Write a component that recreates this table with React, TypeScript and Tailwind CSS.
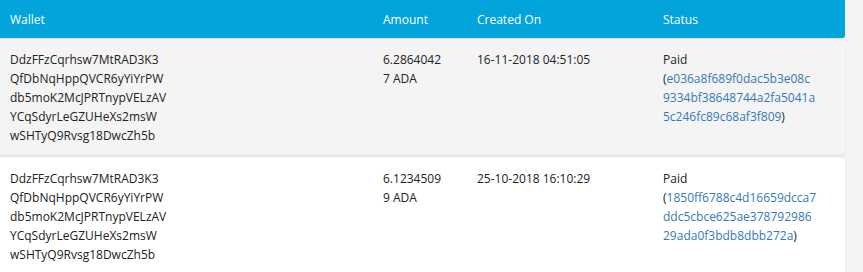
import React from 'react';

interface Payment {
  wallet: string[];
  amount: string[];
  createdOn: string;
  tx: string[];
}

const WALLET = [
  'DdzFFzCqrhsw7MtRAD3K3',
  'QfDbNqHppQVCR6yYiYrPW',
  'db5moK2McJPRTnypVELzAV',
  'YCqSdyrLeGZUHeXs2msW',
  'wSHTyQ9Rvsg18DwcZh5b',
];

const PAYMENTS: Payment[] = [
  {
    wallet: WALLET,
    amount: ['6.2864042', '7 ADA'],
    createdOn: '16-11-2018 04:51:05',
    tx: ['e036a8f689f0dac5b3e08c', '9334bf38648744a2fa5041a', '5c246fc89c68af3f809'],
  },
  {
    wallet: WALLET,
    amount: ['6.1234509', '9 ADA'],
    createdOn: '25-10-2018 16:10:29',
    tx: ['1850ff6788c4d16659dcca7', 'ddc5cbce625ae378792986', '29ada0f3bdb8dbb272a'],
  },
];

const cols = 'grid grid-cols-[373px_94px_186px_192px]';

const Lines: React.FC<{ lines: string[] }> = ({ lines }) => (
  <>
    {lines.map((l) => (
      <span key={l} className="block">{l}</span>
    ))}
  </>
);

export default function App() {
  return (
    <div
      className="h-[272px] bg-[#f3f4f5] overflow-hidden text-[12px] leading-[19px] text-[#222]"
      style={{ fontFamily: '"Open Sans", "Noto Sans", sans-serif' }}
    >
      <div className="w-[845px]">
        {/* Header */}
        <div className={`${cols} h-[38px] items-center bg-[#03a3dc] text-white rounded-br-[3px] shadow-[0_1px_1px_rgba(0,0,0,0.08)]`}>
          <div className="pl-[10px]">Wallet</div>
          <div className="pl-[10px]">Amount</div>
          <div className="pl-[10px]">Created On</div>
          <div className="pl-[10px]">Status</div>
        </div>

        <div className="flex flex-col gap-[3px] mt-[1px]">
          {PAYMENTS.map((p, i) => (
            <div
              key={i}
              className={`${cols} pt-[11px] pb-[10px] rounded-r-[3px] shadow-[0_1px_2px_rgba(0,0,0,0.1)] ${i % 2 === 0 ? 'bg-[#f4f4f4]' : 'bg-white'}`}
            >
              <div className="pl-[10px]"><Lines lines={p.wallet} /></div>
              <div className="pl-[10px]"><Lines lines={p.amount} /></div>
              <div className="pl-[10px]">{p.createdOn}</div>
              <div className="pl-[10px]">
                <span className="block">Paid</span>
                {p.tx.map((t, j) => (
                  <span key={t} className="block">
                    {j === 0 && '('}
                    <a href="#" className="text-[#337ab7]">{t}</a>
                    {j === p.tx.length - 1 && ')'}
                  </span>
                ))}
              </div>
            </div>
          ))}
        </div>
      </div>
    </div>
  );
}
